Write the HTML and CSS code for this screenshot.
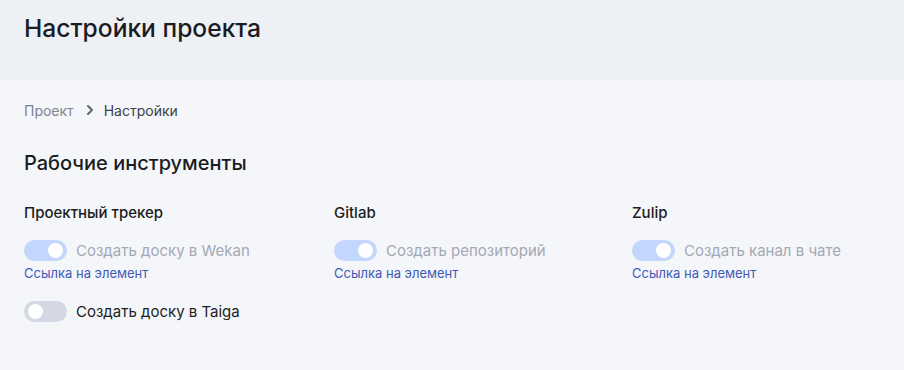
FILE: index.html
```html
<!DOCTYPE html>
<html>
	<head>
		<meta charset="UTF-8">
		<title>Настройки проекта</title>
		<link rel="stylesheet" href="styles.css">
	</head>
	<body>
		<div class="head">
			<h1>Настройки проекта</h1>
		</div>
		<div class="content">
			<div class="crumbs">
				<a href="">Проект</a>
				<svg class="chev" width="8" height="12" viewBox="0 0 8 12"><path d="M2 2l4 4-4 4" fill="none" stroke="#5d6473" stroke-width="2" stroke-linecap="round" stroke-linejoin="round"/></svg>
				<span>Настройки</span>
			</div>
			<h2>Рабочие инструменты</h2>
			<div class="tools">
				<div class="col">
					<h3>Проектный трекер</h3>
					<div class="item">
						<label class="row disabled"><i class="sw on"></i>Создать доску в Wekan</label>
						<a class="link" href="">Ссылка на элемент</a>
					</div>
					<div class="item">
						<label class="row"><i class="sw"></i>Создать доску в Taiga</label>
					</div>
				</div>
				<div class="col">
					<h3>Gitlab</h3>
					<div class="item">
						<label class="row disabled"><i class="sw on"></i>Создать репозиторий</label>
						<a class="link" href="">Ссылка на элемент</a>
					</div>
				</div>
				<div class="col">
					<h3>Zulip</h3>
					<div class="item">
						<label class="row disabled"><i class="sw on"></i>Создать канал в чате</label>
						<a class="link" href="">Ссылка на элемент</a>
					</div>
				</div>
			</div>
		</div>
	</body>
</html>
```

FILE: styles.css
```css
*{
	margin:0;
	padding:0;
}
a{
	text-decoration: none;
}
body{
	font-family:"Inter","Noto Sans",sans-serif;
	background:#f5f6fa;
	color:#1a1c22;
}
.head{
	height:80px;
	background:#edf0f5;
	padding:0 24px;
	box-sizing:border-box;
}
.head h1{
	font-size:24.6px;
	font-weight:500;
	line-height:56px;
}
.content{
	padding:20px 24px 0;
}
.crumbs{
	display:flex;
	align-items:center;
	gap:10px;
	font-size:14px;
	height:20px;
}
.crumbs a{
	color:#7d828f;
}
.crumbs span{
	color:#3b3f4a;
}
.chev{
	margin-left:2px;
}
h2{
	font-size:20px;
	font-weight:500;
	margin-top:30px;
	line-height:26px;
}
.tools{
	display:flex;
	margin-top:27px;
}
.col{
	width:310px;
	flex:none;
}
.col:nth-child(2){
	width:298px;
}
.col:last-child{
	width:auto;
}
h3{
	font-size:15px;
	font-weight:500;
	line-height:20px;
}
.item{
	margin-top:16px;
}
.item + .item{
	margin-top:18px;
}
.row{
	display:flex;
	align-items:center;
	gap:9px;
	font-size:15px;
	color:#222;
	height:22px;
}
.row.disabled{
	color:#a4a8b4;
}
.sw{
	width:43px;
	height:21px;
	border-radius:11px;
	background:#d3d8e4;
	position:relative;
	flex:none;
}
.sw:after{
	content:"";
	position:absolute;
	width:15px;
	height:15px;
	border-radius:50%;
	background:#fff;
	top:3px;
	left:4px;
}
.sw.on{
	background:#c3d6fd;
}
.sw.on:after{
	left:24px;
}
.link{
	display:block;
	font-size:13px;
	color:#3e5ab6;
	line-height:18px;
	margin-top:3px;
}
```
